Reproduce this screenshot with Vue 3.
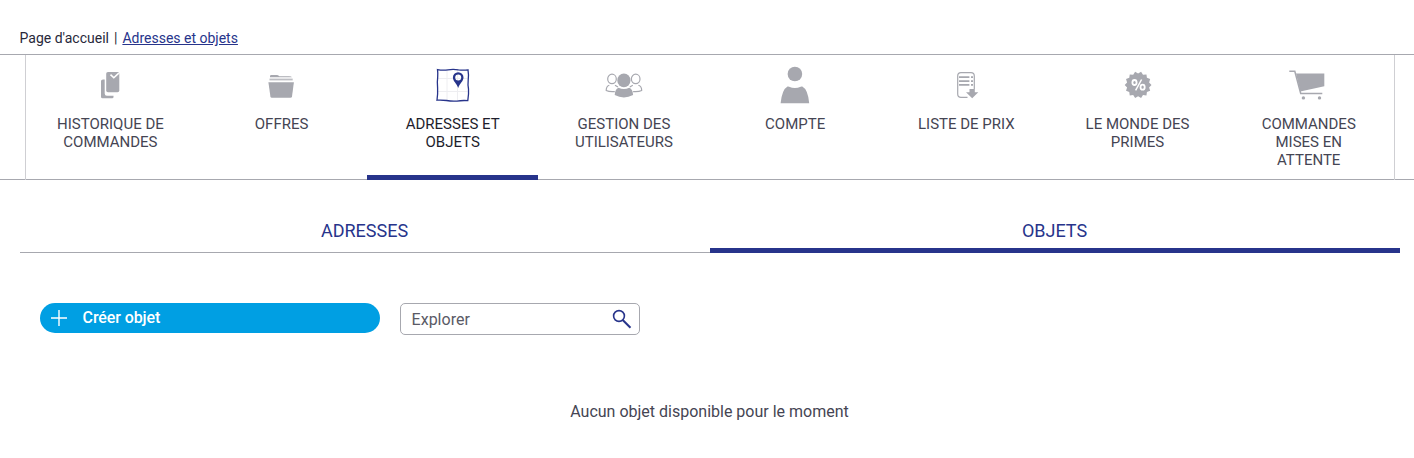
<script setup>
import { ref } from 'vue'

const active = ref(2)
const tab = ref(1)
const search = ref('')
const items = [
  { id: 'history', label: 'HISTORIQUE DE COMMANDES', box: '0 0 50 50' },
  { id: 'offers', label: 'OFFRES', box: '0 0 50 50' },
  { id: 'map', label: 'ADRESSES ET OBJETS', box: '-0.5 0 50 50' },
  { id: 'users', label: 'GESTION DES UTILISATEURS', box: '-1 0 50 50' },
  { id: 'account', label: 'COMPTE', box: '0 0 50 50' },
  { id: 'prices', label: 'LISTE DE PRIX', box: '0 0 50 50' },
  { id: 'bonus', label: 'LE MONDE DES PRIMES', box: '-0.4 0 50 50' },
  { id: 'cart', label: 'COMMANDES MISES EN ATTENTE', box: '1 0 50 50' },
]
// Outline of the 14-point rosette badge
const badge = Array.from({ length: 28 }, (_, i) => {
  const r = i % 2 ? 11.3 : 13.4
  const a = ((i + 1) * Math.PI) / 14
  return `${(25.7 + r * Math.sin(a)).toFixed(2)},${(24.9 - r * Math.cos(a)).toFixed(2)}`
}).join(' ')
</script>

<template>
  <div class="page">
    <div class="crumbs"><span>Page d'accueil</span><span class="sep">|</span><a>Adresses et objets</a></div>
    <nav class="bar">
      <div class="items">
        <a v-for="(item, i) in items" :key="item.id" class="item" :class="{ active: i === active }" @click="active = i">
          <svg class="icon" :viewBox="item.box" width="50" height="50">
            <g v-if="item.id === 'history'">
              <path d="M18 19.500h1.700v14q0 2.200 2.200 2.200h6.600V37q0 1.300-1.300 1.300H17.500Q16 38.300 16 36.800V21q0-1.500 2-1.500z" />
              <path d="M23 12h9.500q1.800 0 1.800 1.800v16.700q0 1.800-1.800 1.800H23q-1.800 0-1.800-1.800V13.800Q21.200 12 23 12z" />
              <path d="M25.500 14.600l3.300 3.200 5-4.700" fill="none" stroke="#fff" stroke-width="1.500" />
            </g>
            <g v-else-if="item.id === 'offers'">
              <path d="M14 17.200v-1q0-1.200 1.200-1.200h5.800q1 0 1.800.8l.5.400H33q2.800 0 2.800 1z" />
              <path d="M13.500 18.600H36.700v1.800H13.500z" opacity=".75" />
              <path d="M12.400 22.200H37.900L36 36.400q-.2 1.400-1.600 1.400H15.900q-1.300 0-1.500-1.400z" />
            </g>
            <g v-else-if="item.id === 'map'" fill="none">
              <path d="M19.500 10v30M30 10v30M10 18.500h30M10 31.500h30" stroke="#eeeef1" />
              <path d="M10 9.600Q15.500 10.700 20.500 9.800 26 8.900 31 9.900 36 10.500 40.500 9.800 41.400 15 40.700 20 40.200 25 41 29 41.400 34 40.300 40.600 34 40.200 29.500 41.100 24 41.500 19 40.500 14 39.900 9.500 40.200 10.400 34 10.100 28 9.500 22 10.200 17 10.500 13 10 9.600z" stroke="#27348b" stroke-width="1.300" />
              <path fill-rule="evenodd" d="M30.700 12.200a5.300 5.300 0 0 1 5.300 5.400c0 3.600-3.600 5.800-5.300 10.300-1.700-4.500-5.300-6.700-5.300-10.300a5.300 5.300 0 0 1 5.300-5.400zm0 2.300a3 3 0 1 0 0 6 3 3 0 1 0 0-6z" fill="#27348b" />
            </g>
            <g v-else-if="item.id === 'users'">
              <g fill="none" stroke="#a7a8af" stroke-width="1.200">
                <ellipse cx="13" cy="18.900" rx="4.300" ry="4.700" /><ellipse cx="36.700" cy="18.900" rx="4.300" ry="4.700" />
                <path d="M10.300 25.300Q7.200 26.300 7.200 30.500q3.200 1.600 8.600 1.100M16 25.300l3 1.800M39.400 25.300q3.300 1 3.300 5.200-3.200 1.600-8.600 1.100M33.800 25.300l-3 1.800" />
              </g>
              <ellipse cx="24.900" cy="20.400" rx="6.600" ry="6.900" />
              <path d="M19.500 27.800q5.400 2.600 10.800 0 3.500 1.200 3.800 7.300-9.200 4.600-18.400 0 .3-6.100 3.800-7.300z" />
            </g>
            <g v-else-if="item.id === 'account'">
              <circle cx="24.900" cy="14" r="7.300" />
              <path d="M17.500 26.500q1-.3 1.600.3 5.800 2.600 11.600 0 .6-.6 1.600-.3Q38 29.500 39.200 43.300H10.600Q12 29.500 17.500 26.500z" />
            </g>
            <g v-else-if="item.id === 'prices'">
              <path d="M26.500 37.300H20q-3.300 0-3.300-3.300V16q0-3.300 3.300-3.300h10q3.300 0 3.300 3.300v13" fill="none" stroke="#a7a8af" stroke-width="1.200" />
              <path d="M18 16.200h10.400V18H18zM18 20.200h10.400V22H18zM18 24.100h10.400v1.700H18zM30 16.200h2V18h-2zM30 20.200h2V22h-2zM30 24.100h2v1.700h-2z" />
              <path d="M28.500 29h5.300v3.300h3.500l-6.100 5.900-6.200-5.900h3.500z" />
            </g>
            <g v-else-if="item.id === 'bonus'">
              <polygon :points="badge" />
              <g fill="none" stroke="#fff" stroke-width="1.800">
                <ellipse cx="22.100" cy="22.500" rx="2.100" ry="2.500" /><ellipse cx="30.200" cy="27.200" rx="2.100" ry="2.500" />
                <path d="M29.200 19.500l-6 10.800" stroke-width="1.500" />
              </g>
            </g>
            <g v-else>
              <path d="M14 13.500h28.300v12.800L18.300 31.500z" />
              <path d="M7.300 11.300h5.500l5.900 22.200h21.600" fill="none" stroke="#a7a8af" stroke-width="1.500" />
              <circle cx="21.400" cy="37.900" r="1.700" /><circle cx="37.500" cy="37.900" r="1.700" />
            </g>
          </svg>
          <span class="label">{{ item.label }}</span>
        </a>
      </div>
    </nav>
    <div class="tabs">
      <a v-for="(name, i) in ['ADRESSES', 'OBJETS']" :key="name" class="tab" :class="{ selected: i === tab }" @click="tab = i">{{ name }}</a>
    </div>
    <div class="tools">
      <button class="create">
        <svg width="18" height="18" viewBox="0 0 18 18"><path d="M9 1v16M1 9h16" stroke="#fff" stroke-width="1.400" /></svg>
        <span>Créer objet</span>
      </button>
      <label class="search">
        <input v-model="search" placeholder="Explorer" />
        <svg width="20" height="20" viewBox="0 0 20 20" fill="none" stroke="#27348b"><circle cx="7" cy="7" r="5.400" stroke-width="1.600" /><path d="M10.700 11l7.800 7.800" stroke-width="2" /></svg>
      </label>
    </div>
    <p class="empty">Aucun objet disponible pour le moment</p>
  </div>
</template>

<style>
body { margin: 0; background: #fff; }
</style>

<style scoped>
.page { height: 458px; overflow: hidden; font-family: Roboto, "Liberation Sans", sans-serif; color: #454553; }
.crumbs { box-sizing: border-box; height: 54px; padding: 29px 20px 0 19.6px; font-size: 14px; line-height: 18px; color: #28283a; }
.sep { margin: 0 5px; }
.crumbs a { color: #27348b; text-decoration: underline; }
.bar { box-sizing: border-box; height: 126px; border-top: 1px solid #a7a8af; border-bottom: 1px solid #a7a8af; }
.items { width: 1370px; height: 125px; margin-left: 25px; padding-right: 0.5px; box-sizing: border-box; display: grid; grid-template-columns: repeat(8, 1fr); box-shadow: inset 1px 0 #cfcfd3, inset -1px 0 #cfcfd3; }
.item { box-sizing: border-box; height: 125px; padding-top: 5px; cursor: pointer; }
.active { margin-right: 0.2px; border-bottom: 5px solid #27348b; color: #1e1e2d; }
.icon { display: block; margin-left: 59.8px; fill: #a7a8af; }
.label { display: block; margin: 5px 25.2px 0 24.8px; text-align: center; font-size: 15px; line-height: 18px; }
.tabs { display: grid; grid-template-columns: 1fr 1fr; margin: 34px 14px 0 20px; }
.tab { box-sizing: border-box; height: 39px; padding-right: 1px; border-bottom: 1px solid #a7a8af; text-align: center; font-size: 18px; line-height: 34px; color: #27348b; cursor: pointer; }
.selected { border-bottom: 5px solid #27348b; }
.tools { display: flex; align-items: flex-start; gap: 20px; margin: 50px 0 0 40px; }
.create { display: flex; align-items: center; gap: 14.6px; box-sizing: border-box; width: 340px; height: 30px; padding: 0 10px; border: 0; border-radius: 15px; background: #009fe3; color: #fff; font: 500 16px/30px Roboto, sans-serif; letter-spacing: -0.1px; }
.create span { height: 30px; }
.search { display: flex; align-items: center; box-sizing: border-box; width: 240px; height: 32px; padding: 0 7px 0 10.6px; border: 1px solid #a7a8af; border-radius: 5px; }
.search input { flex: 1; min-width: 0; padding: 2px 0 0; border: 0; outline: 0; background: none; font: 16px/28px Roboto, sans-serif; color: #454553; }
.search input::placeholder { color: #5a5a66; opacity: 1; }
.empty { margin: 67px 0 0 5px; text-align: center; font-size: 16px; line-height: 20px; }
</style>
